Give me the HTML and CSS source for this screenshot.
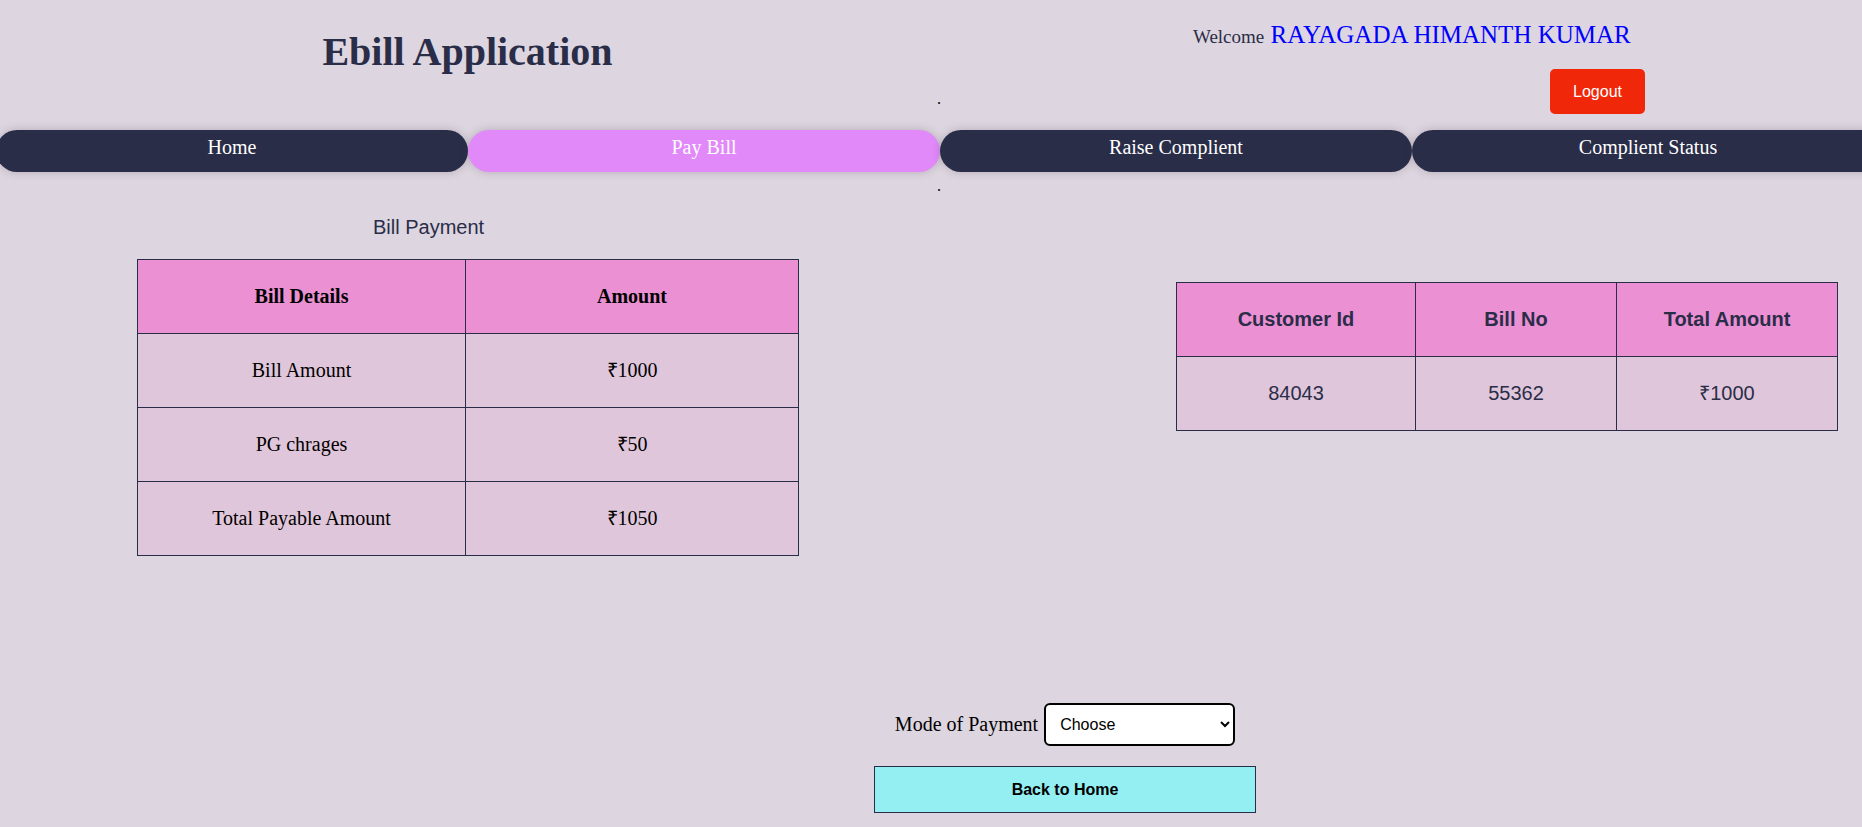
FILE: index.html
```html
<!DOCTYPE html>
<html lang="en">
<head>
<meta charset="utf-8">
<title>Ebill Application</title>
<link rel="stylesheet" href="styles.css">
</head>
<body>
<header class="top">
  <div class="brand"><h1 class="title">Ebill Application</h1></div>
  <div class="dot">.</div>
  <div class="user">
    <p class="welcome"><span class="welcome-word">Welcome</span> <span class="name">RAYAGADA HIMANTH KUMAR</span></p>
    <button class="logout">Logout</button>
  </div>
</header>
<nav class="nav">
  <a class="nav-item">Home</a>
  <a class="nav-item active">Pay Bill</a>
  <a class="nav-item">Raise Complient</a>
  <a class="nav-item">Complient Status</a>
</nav>
<div class="dot-line">.</div>
<main class="main">
  <section class="left">
    <p class="section-title">Bill Payment</p>
    <table class="bill-table">
      <colgroup><col class="c1"><col class="c2"></colgroup>
      <tr><th>Bill Details</th><th>Amount</th></tr>
      <tr><td>Bill Amount</td><td>₹1000</td></tr>
      <tr><td>PG chrages</td><td>₹50</td></tr>
      <tr><td>Total Payable Amount</td><td>₹1050</td></tr>
    </table>
  </section>
  <section class="right">
    <table class="info-table">
      <colgroup><col class="d1"><col class="d2"><col class="d3"></colgroup>
      <tr><th>Customer Id</th><th>Bill No</th><th>Total Amount</th></tr>
      <tr><td>84043</td><td>55362</td><td>₹1000</td></tr>
    </table>
  </section>
</main>
<section class="payment">
  <div class="mode-row">
    <label class="mode-label" for="mode">Mode of Payment</label>
    <select id="mode" class="mode-select">
      <option>Choose</option>
      <option>UPI</option>
      <option>Card</option>
    </select>
  </div>
  <button class="back">Back to Home</button>
</section>
</body>
</html>
```

FILE: styles.css
```css
html, body {
  overflow-x: hidden;
}
body {
  margin: 0;
  background: #ddd5df;
  font-family: "Liberation Serif", "Times New Roman", serif;
  color: #000;
}

.top {
  display: flex;
  align-items: flex-start;
  height: 130px;
}
.brand {
  width: 935px;
  text-align: center;
}
.title {
  margin: 0;
  padding-top: 29px;
  font-size: 40px;
  line-height: 46px;
  font-weight: bold;
  color: #2a2d48;
}
.dot {
  width: 8px;
  padding-top: 90px;
  padding-left: 2px;
  box-sizing: border-box;
  font-size: 16px;
  line-height: 18px;
}
.user {
  margin-left: 250px;
  display: flex;
  flex-direction: column;
  align-items: flex-start;
}
.welcome {
  margin: 0;
  padding-top: 21px;
  font-size: 25px;
  line-height: 28px;
  white-space: nowrap;
}
.welcome-word {
  font-size: 19px;
  color: #2a2d48;
}
.name {
  color: #0000ff;
}
.logout {
  margin-top: 18px;
  margin-left: 357px;
  width: 95px;
  height: 45px;
  border: none;
  border-radius: 5px;
  background: #f1270a;
  color: #fff;
  font-family: "Liberation Sans", Arial, sans-serif;
  font-size: 16px;
}

.nav {
  display: flex;
  margin-left: -4px;
  width: 1888px;
}
.nav-item {
  flex: 0 0 472px;
  height: 42px;
  box-sizing: border-box;
  padding-top: 6px;
  border-radius: 21px;
  background: #2a2d48;
  color: #fff;
  text-align: center;
  font-size: 20px;
  line-height: 23px;
  box-shadow: 0 0 8px rgba(60, 50, 70, 0.25);
}
.nav-item.active {
  background: #e189f9;
}
.dot-line {
  margin-top: 5px;
  padding-left: 937px;
  font-size: 16px;
  line-height: 18px;
}

.main {
  display: flex;
  align-items: flex-start;
}
.left {
  margin-left: 137px;
  width: 661px;
}
.section-title {
  margin: 21px 0 0 236px;
  font-family: "Liberation Sans", Arial, sans-serif;
  font-size: 20px;
  line-height: 23px;
  color: #2a2d48;
}
.bill-table,
.info-table {
  border-collapse: collapse;
  table-layout: fixed;
  width: 661px;
}
.bill-table {
  margin-top: 20px;
}
.bill-table .c1 { width: 328px; }
.bill-table .c2 { width: 333px; }
.bill-table th,
.bill-table td,
.info-table th,
.info-table td {
  border: 1px solid #2a2d48;
  height: 73px;
  padding: 0;
  text-align: center;
  vertical-align: middle;
  font-size: 20px;
  line-height: 23px;
}
.bill-table th {
  background: #ec90d4;
  font-weight: bold;
}
.bill-table td {
  background: #e0c6da;
}
.right {
  margin-left: 378px;
  margin-top: 87px;
}
.info-table .d1 { width: 239px; }
.info-table .d2 { width: 201px; }
.info-table .d3 { width: 221px; }
.info-table th,
.info-table td {
  font-family: "Liberation Sans", Arial, sans-serif;
  color: #2a2d48;
}
.info-table th {
  background: #ec90d4;
  font-weight: bold;
}
.info-table td {
  background: #e0c6da;
}

.payment {
  padding-left: 268px;
  margin-top: 147px;
  display: flex;
  flex-direction: column;
  align-items: center;
}
.mode-row {
  display: flex;
  align-items: center;
  gap: 6px;
}
.mode-label {
  font-size: 20px;
  line-height: 23px;
}
.mode-select {
  width: 191px;
  height: 43px;
  border: 2px solid #000;
  border-radius: 6px;
  background: #fff;
  padding-left: 10px;
  font-family: "Liberation Sans", Arial, sans-serif;
  font-size: 16px;
  color: #000;
}
.back {
  margin-top: 20px;
  width: 382px;
  height: 47px;
  background: #94eff3;
  border: 1px solid #2a2d48;
  font-family: "Liberation Sans", Arial, sans-serif;
  font-weight: bold;
  font-size: 16px;
  color: #000;
}
```
